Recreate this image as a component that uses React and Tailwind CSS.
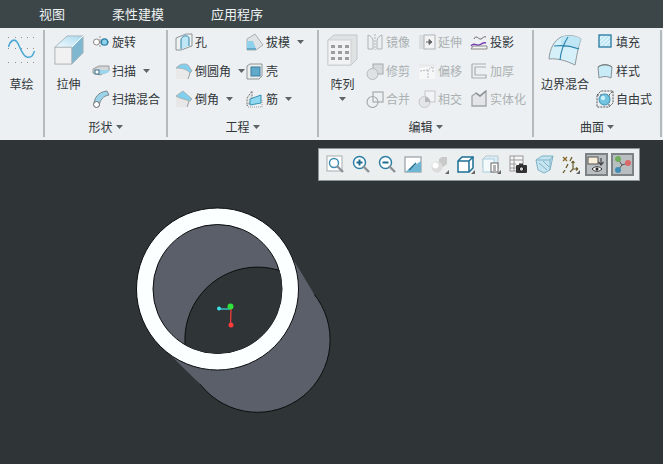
import React from 'react';

const Arrow = ({ className = '' }) => (
  <svg width="7" height="4" viewBox="0 0 7 4" className={className}>
    <path d="M0 0h7L3.5 4z" fill="#5d6468" />
  </svg>
);

// ribbon icons, all in a 18x18 box
const Revolve = () => (
  <svg width="18" height="18" viewBox="0 0 18 18" fill="none">
    <path d="M1 9h16" stroke="#777" strokeDasharray="2 1" />
    <path d="M8 3v12" stroke="#999" strokeDasharray="2 1" />
    <circle cx="4.5" cy="9" r="3" fill="#fff" stroke="#888" />
    <circle cx="12.5" cy="9" r="3.2" fill="#8fd0ea" stroke="#2b7fa6" strokeWidth="1.3" />
  </svg>
);
const Sweep = () => (
  <svg width="18" height="18" viewBox="0 0 18 18" fill="none">
    <path d="M1 7l6-3h10v5l-9 4-7-2z" fill="#d3d7d9" stroke="#999" />
    <path d="M6 8h11v2c-3 2-6 2-9 2z" fill="#9cd5ec" />
    <rect x="3" y="8" width="4" height="4" fill="#fff" stroke="#3a6f88" />
  </svg>
);
const SweepBlend = () => (
  <svg width="18" height="18" viewBox="0 0 18 18" fill="none">
    <path d="M2 15C2 8 6 2 15 1l2 4C11 6 8 10 7 16z" fill="#9ad3ea" stroke="#7d8a90" />
    <circle cx="4.5" cy="14.5" r="3" fill="#fff" stroke="#666" />
  </svg>
);
const Hole = () => (
  <svg width="18" height="18" viewBox="0 0 18 18" fill="none">
    <path d="M1 5l10-4h6v12l-11 4H1z" fill="#eef1f2" stroke="#8d9598" />
    <path d="M6 16V7c0-4 7-6 8-2v8" fill="#bfe6f5" stroke="#2f86ad" />
  </svg>
);
const Round = () => (
  <svg width="18" height="18" viewBox="0 0 18 18" fill="none">
    <path d="M1 6l3 1 10 2 2 2-3 6H1z" fill="#e9e9e9" />
    <path d="M1 6c3-4 9-5 12-3l4 6-2 2C12 7 6 6 1 6z" fill="#7fd0ef" stroke="#a9b0b3" />
    <path d="M15 11l-2 6" stroke="#9aa0a3" />
  </svg>
);
const Chamfer = () => (
  <svg width="18" height="18" viewBox="0 0 18 18" fill="none">
    <path d="M1 6l4 2 9 2 2 1-3 6H1z" fill="#e7e7e7" />
    <path d="M1 6l7-5 9 8-2 2-10-3z" fill="#7fd0ef" stroke="#a9b0b3" />
    <path d="M14 11l-2 6" stroke="#9aa0a3" />
  </svg>
);
const Draft = () => (
  <svg width="18" height="18" viewBox="0 0 18 18" fill="none">
    <path d="M1 6l8-5 8 11-7 5H1z" fill="#dfe3e4" stroke="#aab0b2" />
    <path d="M1 8v8h9L7 8z" fill="#8fd0ea" />
    <path d="M1 16h9" stroke="#2b88b0" />
  </svg>
);
const Shell = () => (
  <svg width="18" height="18" viewBox="0 0 18 18" fill="none">
    <path d="M1 4l3-2h12v12l-3 3H1z" fill="#eceeee" stroke="#8d9598" />
    <rect x="5" y="5" width="9" height="9" fill="#5fa9cb" stroke="#3c7d9c" />
  </svg>
);
const Rib = () => (
  <svg width="18" height="18" viewBox="0 0 18 18" fill="none">
    <path d="M1 8l5-7v9l-5 6z" fill="#e7e7e7" stroke="#777" strokeDasharray="2 1" />
    <path d="M4 9l11-4v8l-11 2z" fill="#8fd8ef" stroke="#3a91b6" />
    <path d="M2 17h14V9" stroke="#999" strokeDasharray="1 1" />
  </svg>
);
const Mirror = () => (
  <svg width="18" height="18" viewBox="0 0 18 18" fill="none" stroke="#aeb3b6">
    <path d="M2 2v14h5V8C7 5 5 3 2 2zM16 2v14h-5V8c0-3 2-5 5-6z" />
    <path d="M9 1v16" strokeDasharray="2 1" />
  </svg>
);
const Trim = () => (
  <svg width="18" height="18" viewBox="0 0 18 18" fill="none">
    <rect x="7" y="2" width="10" height="10" fill="#d7dadc" stroke="#a5aaad" />
    <circle cx="6.5" cy="12" r="5.5" fill="#dfe2e4" stroke="#b5babd" />
  </svg>
);
const Merge = () => (
  <svg width="18" height="18" viewBox="0 0 18 18" fill="none" stroke="#a5aaad" strokeWidth="1.2">
    <rect x="7" y="2" width="10" height="10" />
    <circle cx="6.5" cy="12" r="5.5" />
  </svg>
);
const Extend = () => (
  <svg width="18" height="18" viewBox="0 0 18 18" fill="none">
    <rect x="1" y="2" width="6" height="14" fill="#dcdfe1" />
    <rect x="6" y="2" width="11" height="14" fill="#f2f3f4" stroke="#b0b5b8" />
    <path d="M8 9h5M11 6.5L14 9l-3 2.5z" stroke="#666" fill="#666" />
  </svg>
);
const Offset = () => (
  <svg width="18" height="18" viewBox="0 0 18 18" fill="none">
    <path d="M1 2h16v15H1z" fill="#e8eaeb" />
    <path d="M1 6l6-1h10v12H1z" fill="#f6f7f7" />
    <path d="M2 9l8-1 4-3M10 8v9M15 5v5" stroke="#b3b8bb" strokeDasharray="2 1" />
  </svg>
);
const Intersect = () => (
  <svg width="18" height="18" viewBox="0 0 18 18" fill="none" stroke="#c3c7c9">
    <rect x="7" y="1" width="10" height="11" fill="#f2f3f4" />
    <circle cx="6.5" cy="12" r="5.5" fill="#e3e5e7" />
    <path d="M7 7a5.5 5.5 0 0 1 5 5H7z" fill="#b4b8bb" stroke="none" />
  </svg>
);
const Project = () => (
  <svg width="18" height="18" viewBox="0 0 18 18" fill="none">
    <path d="M4 6c2-5 5 1 7 0s3-3 5-2" stroke="#666" />
    <path d="M1 13c3-4 5 0 8-1s4-3 7-2" stroke="#7a3fb5" strokeWidth="1.4" />
    <path d="M1 16l2-3h14v3z" fill="#f1f2f2" stroke="#888" />
  </svg>
);
const Thicken = () => (
  <svg width="18" height="18" viewBox="0 0 18 18" fill="none" stroke="#a9aeb1" strokeWidth="1.2">
    <path d="M2 2h14M2 2v14h14v-3H5V5h11" />
  </svg>
);
const Solidify = () => (
  <svg width="18" height="18" viewBox="0 0 18 18" fill="none">
    <path d="M2 6l4-3 4 3 6-5v15H2z" fill="#e3e5e7" stroke="#a0a5a8" strokeWidth="1.3" />
    <path d="M6 3l4 3 6-5" stroke="#8b9093" strokeWidth="1.5" />
  </svg>
);
const Fill = () => (
  <svg width="18" height="18" viewBox="0 0 18 18" fill="none">
    <defs>
      <pattern id="hatch" width="3" height="3" patternUnits="userSpaceOnUse" patternTransform="rotate(45)">
        <rect width="3" height="3" fill="#bfe6f5" />
        <rect width="1" height="3" fill="#eef8fc" />
      </pattern>
    </defs>
    <rect x="3" y="2" width="12" height="12" fill="url(#hatch)" stroke="#24789f" strokeWidth="1.3" />
  </svg>
);
const Style = () => (
  <svg width="18" height="18" viewBox="0 0 18 18" fill="none">
    <path d="M2 5c4-3 10-3 14 0l-1 11c-4-2-8-2-12 0z" fill="#c7ebf7" stroke="#889094" />
    <path d="M2 5c4-3 10-3 14 0" stroke="#6f777b" />
  </svg>
);
const Freestyle = () => (
  <svg width="18" height="18" viewBox="0 0 18 18" fill="none">
    <path d="M1 5l4-4h12v12l-4 4H1zM1 5h12v12M13 5l4-4" stroke="#555" strokeDasharray="2 1" />
    <circle cx="8.5" cy="9.5" r="5.5" fill="#72c3e0" stroke="#3c8fb1" />
    <circle cx="7" cy="8" r="2.2" fill="#c8eef9" />
  </svg>
);

const Sketch = () => (
  <svg width="30" height="28" viewBox="0 0 30 28" fill="none">
    {[1, 12, 26].map((y) =>
      [1, 8, 14, 20, 26].map((x) => <rect key={`${x}-${y}`} x={x} y={y} width="1" height="1" fill="#8a8f92" />)
    )}
    <path d="M1.500 11C3 5 7 2 10 6s5 14 10 15 6-2 7.500-6" stroke="#4aa9d4" strokeWidth="1.500" />
  </svg>
);
const Extrude = () => (
  <svg width="30" height="30" viewBox="0 0 32 32" fill="none">
    <defs>
      <linearGradient id="extrudeTop" x1="0" y1="1" x2="1" y2="0">
        <stop offset="0" stopColor="#f2fafd" />
        <stop offset="1" stopColor="#a9daef" />
      </linearGradient>
    </defs>
    <path d="M1 13L14 1h17v18L19 31z" fill="#84c0da" />
    <path d="M1 13L14 1h17L19 13z" fill="url(#extrudeTop)" />
    <path d="M19 13L31 1v18L19 31z" fill="#7fb7d1" />
    <rect x="1" y="13" width="18" height="18" fill="#f1f1f1" stroke="#a9afb2" />
    <path d="M1 13L14 1h17v18L19 31" stroke="#a5b5bc" />
    <path d="M19 13L31 1" stroke="#fff" />
  </svg>
);
const Pattern = () => (
  <svg width="31" height="32" viewBox="0 0 31 32" fill="none">
    <path d="M1 6l6-5h23v24l-6 6H1z" fill="#dfe2e3" stroke="#c2c6c8" />
    <rect x="1" y="6" width="23" height="25" fill="#f1f2f2" stroke="#cdd0d2" />
    {[11, 17, 23].map((y) =>
      [4, 11, 18].map((x) => <rect key={`${x}-${y}`} x={x} y={y} width="4" height="3" fill="#9a9ea0" />)
    )}
  </svg>
);
const BoundaryBlend = () => (
  <svg width="34" height="32" viewBox="0 0 34 32" fill="none">
    <path d="M1 25C2 14 6 7 13 3c7-2 14-2 20 2-3 8-4 16-6 26-8-4-17-7-26-6z" fill="#d6f0f9" stroke="#8e989c" />
    <path d="M13 3c7-2 14-2 20 2l-3 9c-6-2-11-3-17-2z" fill="#bfe6f5" />
    <path d="M6 12c9-1 17 0 25 3M20 3c-4 6-7 13-8 23" stroke="#2f86ad" strokeWidth="1.2" />
  </svg>
);

const Tool = ({ icon, label, arrow, off }) => (
  <div className="flex items-center h-[28.5px]">
    <span className="w-[20px] flex items-center shrink-0">{icon}</span>
    <span className={`whitespace-nowrap ${off ? 'text-[#aab0b3]' : ''}`}>{label}</span>
    {arrow && <Arrow className="ml-[7px]" />}
  </div>
);

const BigTool = ({ icon, label, w, extra }) => (
  <div className={`flex flex-col items-center shrink-0 pt-[3px] ${w}`}>
    <div className="h-[34px] flex items-center justify-center">{icon}</div>
    <span className="mt-[7px] leading-[20px] whitespace-nowrap">{label}</span>
    {extra}
  </div>
);

const Group = ({ width, label, children }) => (
  <div className={`flex flex-col h-[107px] mt-[2px] border-r-2 border-[#b4b9bb] shrink-0 ${width}`}>
    <div className="flex h-[87px]">{children}</div>
    {label && (
      <div className="flex items-center justify-center h-[20px]">
        <span>{label}</span>
        <Arrow className="ml-[3px]" />
      </div>
    )}
  </div>
);

const Column = ({ className = '', children }) => <div className={`flex flex-col shrink-0 -mt-[2px] ${className}`}>{children}</div>;

// view toolbar icons
const IconBox = ({ children, active }) => (
  <div className={`w-[23px] h-[23px] flex items-center justify-center shrink-0 ${active ? 'bg-[#b9bec0] border-2 border-[#7d8284]' : ''}`}>
    <svg width="19" height="19" viewBox="0 0 19 19" fill="none">{children}</svg>
  </div>
);
const Handle = () => <path d="M11 11l6 6" stroke="#8b9296" strokeWidth="2.4" />;
const Corner = () => <path d="M19 15v4h-4z" fill="#666" />;

const viewIcons = [
  <>
    <rect x="1" y="1" width="15" height="15" fill="#fff" stroke="#a5abae" />
    <circle cx="8" cy="8" r="4.5" stroke="#3a8bb0" strokeWidth="1.4" fill="#fff" />
    <Handle />
  </>,
  <>
    <circle cx="7.5" cy="7.5" r="6" stroke="#2f7fa4" strokeWidth="1.5" fill="#fff" />
    <path d="M4.5 7.5h6M7.5 4.5v6" stroke="#1f6c90" strokeWidth="2" />
    <Handle />
  </>,
  <>
    <circle cx="7.5" cy="7.5" r="6" stroke="#2f7fa4" strokeWidth="1.5" fill="#fff" />
    <path d="M4.5 7.5h6" stroke="#1f6c90" strokeWidth="2" />
    <Handle />
  </>,
  <>
    <rect x="1" y="2" width="16" height="15" fill="#fff" stroke="#a5abae" strokeWidth="1.4" />
    <path d="M1 17L17 6v11z" fill="#6fb6d4" />
    <path d="M5 15l7-7" stroke="#1f6c90" strokeWidth="1.4" />
  </>,
  <>
    <path d="M9 4l3-2h5v7l-4 3H9z" fill="#c9c9c9" />
    <circle cx="7" cy="12" r="5.5" fill="#dcdcdc" />
    <circle cx="5.5" cy="10.5" r="3" fill="#fff" />
    <Corner />
  </>,
  <>
    <path d="M2 6l4-4h11v11l-4 4H2z" fill="#fff" stroke="#1d6f94" strokeWidth="1.5" />
    <path d="M2 6h11v11M13 6l4-4" stroke="#1d6f94" strokeWidth="1.5" />
    <Corner />
  </>,
  <>
    <path d="M1 4l3-3h12v12H1z" fill="#d9eef6" stroke="#b9c5ca" />
    <rect x="1" y="4" width="11" height="13" fill="#f4fafc" stroke="#a9cede" />
    <rect x="9" y="8" width="7" height="9" fill="#fff" stroke="#666" />
    <path d="M11 11h3M11 13h3M11 15h3" stroke="#666" />
    <Corner />
  </>,
  <>
    <rect x="1" y="1" width="13" height="15" fill="#f5f5f5" stroke="#999" />
    <path d="M1 5h13M1 9h6M1 13h6M5 1v15" stroke="#999" />
    <rect x="7" y="10" width="11" height="8" rx="1" fill="#333" />
    <rect x="10" y="8.5" width="4" height="2" fill="#333" />
    <circle cx="12.5" cy="14" r="2.2" fill="#ccc" stroke="#111" />
  </>,
  <>
    <path d="M1 5l6-4h11l-3 14-6 3-6-3z" fill="#c5e4f0" stroke="#7eb2c8" />
    <path d="M1 5h14v10M15 5l3-4M4 8l8 7M8 6l6 6" stroke="#7eb2c8" />
  </>,
  <>
    <path d="M2 2l4 4M6 2L2 6" stroke="#8a6a2a" strokeWidth="1.3" />
    <path d="M11 2l-2 4M7 9l-2 4M4 15l-2 3" stroke="#6b5a2a" strokeWidth="1.3" />
    <path d="M12 6v8h5M12 14l-3 3M12 6l-1.500 2M12 6l1.500 2M17 14l-2-1.500M17 14l-2 1.500" stroke="#6b5a2a" strokeWidth="1.200" />
    <Corner />
  </>,
];

export default function App() {
  return (
    <div className="w-[663px] h-[464px] overflow-hidden flex flex-col bg-[#2f3536] text-[12px] text-[#30363a] font-['Noto_Sans_CJK_SC','Noto_Sans',sans-serif]">
      {/* tabs */}
      <div className="h-[28px] bg-[#3c4648] flex items-center text-[13px] text-[#eef2f3] pl-[39px] shrink-0">
        <span className="w-[73px]">视图</span>
        <span className="w-[99px]">柔性建模</span>
        <span>应用程序</span>
      </div>

      {/* ribbon */}
      <div className="h-[112px] bg-[#edf0f2] flex shrink-0">
        <Group width="w-[45px]">
          <BigTool icon={<Sketch />} label="草绘" w="w-[43px]" />
        </Group>
        <Group width="w-[123px]" label="形状">
          <BigTool icon={<Extrude />} label="拉伸" w="w-[47px]" />
          <Column>
            <Tool icon={<Revolve />} label="旋转" />
            <Tool icon={<Sweep />} label="扫描" arrow />
            <Tool icon={<SweepBlend />} label="扫描混合" />
          </Column>
        </Group>
        <Group width="w-[151px]" label="工程">
          <Column className="w-[78px] pl-[7px]">
            <Tool icon={<Hole />} label="孔" />
            <Tool icon={<Round />} label="倒圆角" arrow />
            <Tool icon={<Chamfer />} label="倒角" arrow />
          </Column>
          <Column>
            <Tool icon={<Draft />} label="拔模" arrow />
            <Tool icon={<Shell />} label="壳" />
            <Tool icon={<Rib />} label="筋" arrow />
          </Column>
        </Group>
        <Group width="w-[215px]" label="编辑">
          <BigTool
            icon={<Pattern />}
            label="阵列"
            w="w-[47px]"
            extra={<Arrow className="mt-[3px]" />}
          />
          <Column className="w-[52px]">
            <Tool icon={<Mirror />} label="镜像" off />
            <Tool icon={<Trim />} label="修剪" off />
            <Tool icon={<Merge />} label="合并" off />
          </Column>
          <Column className="w-[52px]">
            <Tool icon={<Extend />} label="延伸" off />
            <Tool icon={<Offset />} label="偏移" off />
            <Tool icon={<Intersect />} label="相交" off />
          </Column>
          <Column>
            <Tool icon={<Project />} label="投影" />
            <Tool icon={<Thicken />} label="加厚" off />
            <Tool icon={<Solidify />} label="实体化" off />
          </Column>
        </Group>
        <Group width="w-[128px]" label="曲面">
          <BigTool icon={<BoundaryBlend />} label="边界混合" w="w-[62px]" />
          <Column>
            <Tool icon={<Fill />} label="填充" />
            <Tool icon={<Style />} label="样式" />
            <Tool icon={<Freestyle />} label="自由式" />
          </Column>
        </Group>
      </div>

      {/* model area */}
      <div className="relative flex-1">
        <svg width="663" height="324" viewBox="0 140 663 324" className="absolute left-0 top-0" fill="none">
          <defs>
            <clipPath id="innerFace">
              <circle cx="217.5" cy="289" r="64.5" />
            </clipPath>
          </defs>
          <circle cx="257.5" cy="339.7" r="72.6" fill="#5a5f69" stroke="#0b0d0e" />
          <path d="M281 239L314.500 294.800L200.500 384.600L153.900 339.100z" fill="#5a5f69" />
          <circle cx="217.5" cy="289" r="81" fill="#fcffff" stroke="#0b0d0e" />
          <circle cx="217.5" cy="289" r="64.5" fill="#5a5f69" stroke="#0b0d0e" />
          <circle cx="257.5" cy="339.7" r="72.6" fill="#2f3536" stroke="#0b0d0e" clipPath="url(#innerFace)" />
          <path d="M219 309h11" stroke="#39e0e6" strokeWidth="1.2" />
          <path d="M231 309l-.5 16" stroke="#ff3b3b" strokeWidth="1.2" />
          <path d="M230.500 307v2" stroke="#31e03a" strokeWidth="1.2" />
          <circle cx="219" cy="308.5" r="2" fill="#39e0e6" />
          <circle cx="230.5" cy="306.500" r="3" fill="#31e03a" />
          <circle cx="231" cy="325" r="2.5" fill="#ff3b3b" />
        </svg>

        {/* view toolbar floating over the model */}
        <div className="absolute left-[318px] top-[8px] w-[322px] h-[33px] bg-[#ebeff0] border border-[#8d9496] flex items-center justify-between px-[5px]">
          {viewIcons.map((icon, i) => (
            <IconBox key={i}>{icon}</IconBox>
          ))}
          <IconBox active>
            <rect x="1" y="2" width="10" height="7" fill="#f7efd9" stroke="#555" />
            <path d="M14 3v6M11.500 7l2.500 3 2.500-3" stroke="#444" strokeWidth="1.2" />
            <path d="M5 14c3-3 7-3 10 0-3 3-7 3-10 0z" fill="#fff" stroke="#333" />
            <circle cx="10" cy="14" r="1.5" fill="#222" />
          </IconBox>
          <IconBox active>
            <path d="M5 4l4 6 6-2M9 10l-4 5" stroke="#555" />
            <circle cx="5" cy="4" r="3" fill="#6fae5c" />
            <circle cx="15" cy="8" r="3" fill="#d9696a" />
            <circle cx="5" cy="15" r="3" fill="#3f8db5" />
          </IconBox>
        </div>
      </div>
    </div>
  );
}
